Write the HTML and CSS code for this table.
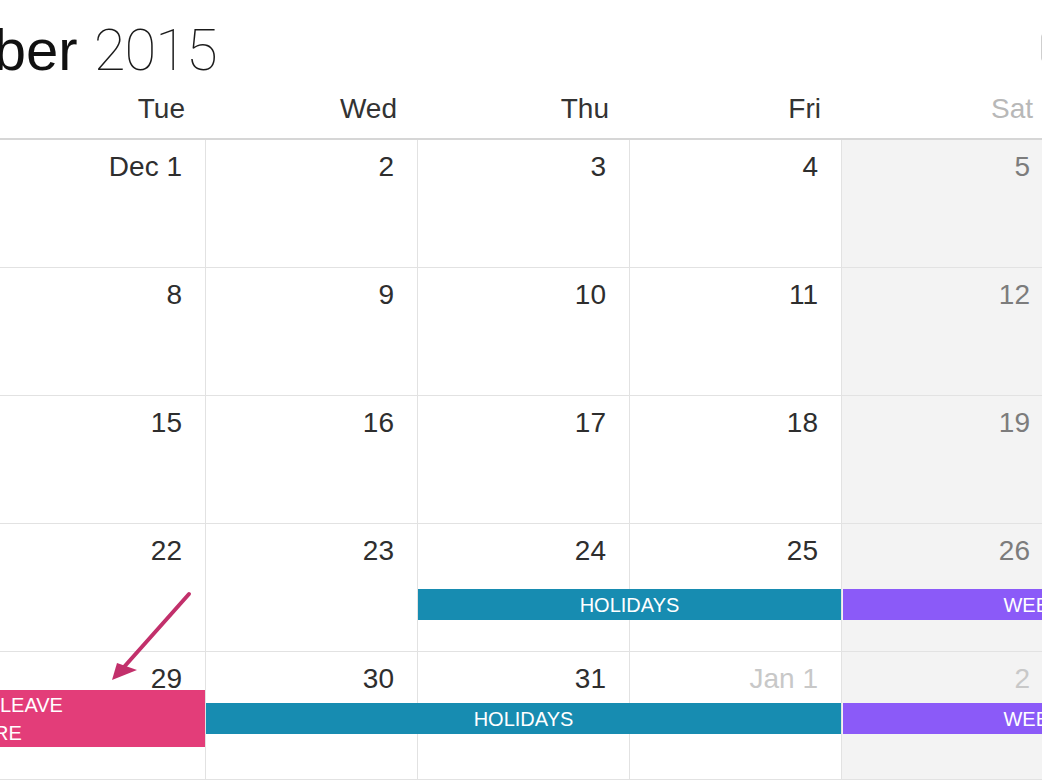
FILE: index.html
```html
<!DOCTYPE html>
<html lang="en">
<head>
<meta charset="utf-8">
<title>December 2015</title>
<link rel="stylesheet" href="styles.css">
</head>
<body>
<div class="cal">
  <div class="top">
    <h1 class="title"><span class="month">December</span> <span class="year">2015</span></h1>
    <div class="btn"></div>
  </div>
  <div class="dow">
    <div class="dname">Mon</div>
    <div class="dname">Tue</div>
    <div class="dname">Wed</div>
    <div class="dname">Thu</div>
    <div class="dname">Fri</div>
    <div class="dname we">Sat</div>
    <div class="dname we">Sun</div>
  </div>

  <div class="week">
    <div class="days">
      <div class="day other">Nov 30</div>
      <div class="day">Dec 1</div>
      <div class="day">2</div>
      <div class="day">3</div>
      <div class="day">4</div>
      <div class="day weekend">5</div>
      <div class="day weekend">6</div>
    </div>
  </div>

  <div class="week">
    <div class="days">
      <div class="day">7</div>
      <div class="day">8</div>
      <div class="day">9</div>
      <div class="day">10</div>
      <div class="day">11</div>
      <div class="day weekend">12</div>
      <div class="day weekend">13</div>
    </div>
  </div>

  <div class="week">
    <div class="days">
      <div class="day">14</div>
      <div class="day">15</div>
      <div class="day">16</div>
      <div class="day">17</div>
      <div class="day">18</div>
      <div class="day weekend">19</div>
      <div class="day weekend">20</div>
    </div>
  </div>

  <div class="week">
    <div class="days">
      <div class="day">21</div>
      <div class="day">22</div>
      <div class="day">23</div>
      <div class="day">24</div>
      <div class="day">25</div>
      <div class="day weekend">26</div>
      <div class="day weekend">27</div>
    </div>
    <div class="events events-w4">
      <div class="ev blue span-thu-fri">HOLIDAYS</div>
      <div class="ev purple span-sat-sun">WEEKEND</div>
    </div>
  </div>

  <div class="week">
    <div class="days">
      <div class="day">28</div>
      <div class="day">29</div>
      <div class="day">30</div>
      <div class="day">31</div>
      <div class="day other">Jan 1</div>
      <div class="day weekend other">2</div>
      <div class="day weekend other">3</div>
    </div>
    <div class="events events-w5">
      <div class="ev pink span-mon-tue"><span class="ln">ANNUAL LEAVE</span><span class="ln">CLARE</span></div>
      <div class="ev blue thin span-wed-fri">HOLIDAYS</div>
      <div class="ev purple thin span-sat-sun">WEEKEND</div>
    </div>
  </div>
</div>

<svg class="arrow" width="1042" height="782" viewBox="0 0 1042 782" aria-hidden="true">
  <line x1="189" y1="594" x2="124" y2="667" stroke="#c2306b" stroke-width="4" stroke-linecap="round"/>
  <polygon points="112,680 117,663 137,670" fill="#c2306b"/>
</svg>
</body>
</html>
```

FILE: styles.css
```css
* { box-sizing: border-box; }

html, body {
  margin: 0;
  padding: 0;
  background: #ffffff;
  overflow: hidden;
}

body {
  width: 1042px;
  height: 782px;
  position: relative;
  font-family: "Liberation Sans", Arial, sans-serif;
  color: #333333;
}

.cal {
  margin-left: -218px;
  width: 1484px;
}

.top {
  display: flex;
  align-items: flex-start;
  height: 88px;
  padding-left: 28px;
}

.title {
  flex: 0 0 1231px;
  margin: 0;
  padding-top: 21px;
  font-size: 58px;
  line-height: 58px;
  font-weight: 400;
  color: #111111;
  white-space: nowrap;
}

.month {
  font-family: "Liberation Sans", Arial, sans-serif;
}

.year {
  font-family: Roboto, "Liberation Sans", sans-serif;
  font-weight: 100;
  letter-spacing: -1px;
  color: #1a1a1a;
}

.btn {
  flex: 0 0 90px;
  margin-top: 32px;
  height: 31px;
  border: 1px solid #cfcfcf;
  border-radius: 5px;
  background: #ffffff;
}

.dow {
  display: grid;
  grid-template-columns: repeat(7, 212px);
  height: 52px;
  border-bottom: 2px solid #d6d6d6;
}

.dname {
  text-align: right;
  padding: 7px 21px 0 0;
  font-size: 28px;
  line-height: 28px;
  color: #333333;
}

.dname.we {
  color: #b8b8b8;
}

.week {
  display: grid;
  height: 128px;
  border-bottom: 1px solid #e2e2e2;
}

.days,
.events {
  grid-area: 1 / 1;
  display: grid;
  grid-template-columns: repeat(7, 212px);
}

.day {
  border-right: 1px solid #e2e2e2;
  text-align: right;
  padding: 13px 23px 0 0;
  font-size: 28px;
  line-height: 28px;
  color: #2e2e2e;
}

.day.weekend {
  background: #f3f3f3;
  color: #7c7c7c;
}

.day.other {
  color: #c8c8c8;
}

.events {
  align-items: center;
}

.events-w4 {
  grid-template-rows: 65px 31px;
}

.events-w5 {
  grid-template-rows: 38px 57px;
}

.ev {
  grid-row: 2;
  align-self: stretch;
  display: flex;
  flex-direction: column;
  align-items: center;
  justify-content: center;
  margin-right: 1px;
  color: #ffffff;
  font-size: 20px;
  line-height: 28px;
  white-space: nowrap;
  overflow: hidden;
}

.ev.thin {
  align-self: center;
  height: 31px;
}

.pink {
  padding-right: 10px;
}

.ln {
  display: block;
}

.blue { background: #178cb1; }
.purple { background: #8b5af8; margin-left: 1px; }
.pink { background: #e33d79; }

.span-mon-tue { grid-column: 1 / 3; }
.span-wed-fri { grid-column: 3 / 6; }
.span-thu-fri { grid-column: 4 / 6; }
.span-sat-sun { grid-column: 6 / 8; }

.arrow {
  position: absolute;
  left: 0;
  top: 0;
  pointer-events: none;
}
```
